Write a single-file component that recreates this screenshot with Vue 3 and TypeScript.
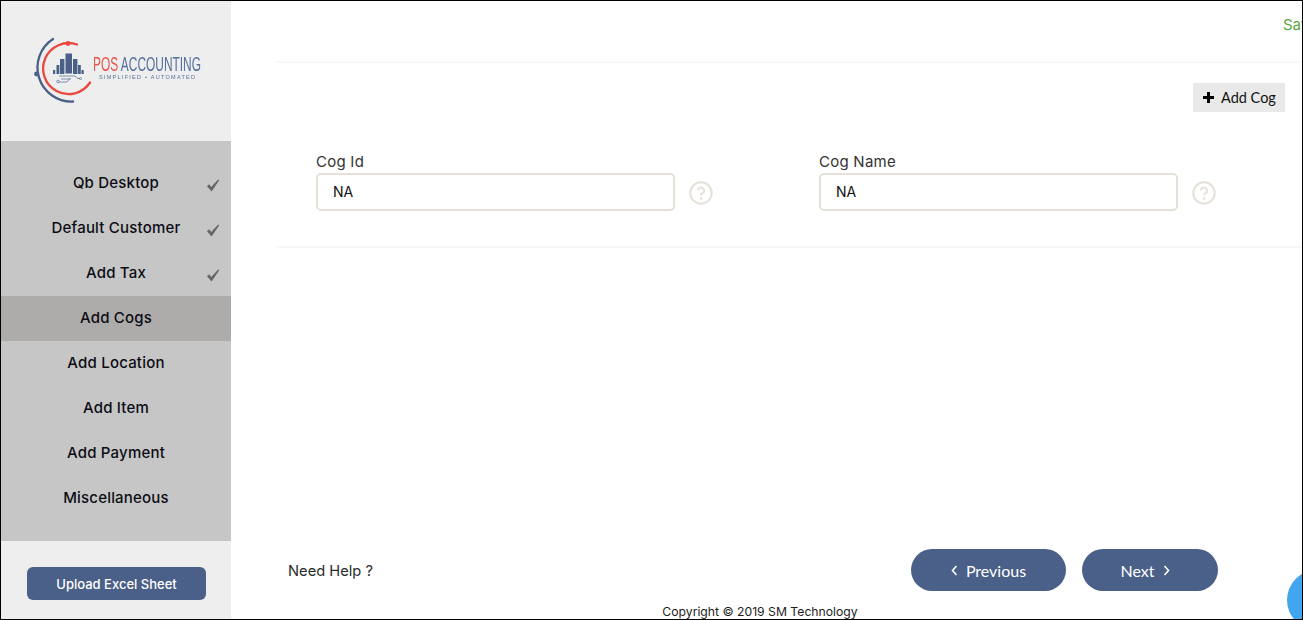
<template>
  <div class="page">
    <aside class="sidebar">
      <div class="logoBox">
        <svg class="logo" width="230" height="140" viewBox="0 0 230 140">
          <g fill="none" stroke-linecap="round">
            <path d="M52 38 A34 34 0 0 0 72 100.5" stroke="#4a6088" stroke-width="2.3" />
            <path d="M76 43.5 A25.5 25.5 0 1 0 89 81.5" stroke="#e8483f" stroke-width="2.3" />
            <circle cx="35.5" cy="73" r="2.4" fill="#4a6088" />
            <circle cx="67" cy="42.5" r="2.4" fill="#e8483f" />
          </g>
          <g fill="#4a6088">
            <rect x="64.5" y="52.5" width="6.5" height="20" />
            <rect x="59" y="58" width="4.4" height="15" />
            <rect x="72" y="58" width="4.4" height="15" />
            <rect x="55.5" y="64" width="2.8" height="9" />
            <rect x="77" y="64" width="2.8" height="9" />
            <rect x="52" y="69" width="2.2" height="4" />
            <rect x="80.5" y="69" width="2.2" height="4" />
          </g>
          <g fill="none" stroke="#6f83a6" stroke-width="0.9">
            <path d="M58 75 H74 L77 77.5 H79" />
            <path d="M60 78 H70" />
            <path d="M58 81 H66 L69 77" />
            <circle cx="57" cy="80.5" r="1.3" />
            <circle cx="79.5" cy="77.5" r="1" />
          </g>
          <text class="logoName" x="92" y="70" textLength="108" lengthAdjust="spacingAndGlyphs"><tspan fill="#e8564e">POS</tspan><tspan fill="#56709c"> ACCOUNTING</tspan></text>
          <text class="logoTag" x="98" y="78" fill="#56709c" textLength="96">SIMPLIFIED • AUTOMATED</text>
        </svg>
      </div>
      <nav class="menu">
        <div v-for="item in steps" :key="item.name" class="menuItem" :class="{ active: item.name === current }">
          <span>{{ item.name }}</span>
          <svg v-if="item.done" class="tick" width="14" height="13" viewBox="0 0 14 13">
            <path d="M1 7.2 L3.2 5.2 L5.2 8 L12.2 0.6 L13.2 1.2 L5.6 12.4 Z" fill="#666" />
          </svg>
        </div>
      </nav>
      <div class="sideFoot">
        <button class="uploadBtn">Upload Excel Sheet</button>
      </div>
    </aside>

    <main class="main">
      <div class="status">Saved</div>
      <div class="addRow">
        <button class="addBtn">
          <svg width="11" height="11" viewBox="0 0 11 11"><path d="M4 0 H7 V4 H11 V7 H7 V11 H4 V7 H0 V4 H4 Z" fill="#000" /></svg>
          Add Cog
        </button>
      </div>
      <div class="fields">
        <div v-for="field in fields" :key="field" class="field">
          <label>{{ field }}</label>
          <div class="inputRow">
            <input type="text" value="NA">
            <svg class="help" width="24" height="24" viewBox="0 0 24 24">
              <circle cx="12" cy="12" r="10.7" fill="none" stroke="#e6e1d8" stroke-width="2" />
              <path d="M8.8 9.6 A3.2 3 0 1 1 13.6 12.2 Q12 13 12 14.6" fill="none" stroke="#e6e1d8" stroke-width="2" />
              <circle cx="12" cy="17.6" r="1.3" fill="#e6e1d8" />
            </svg>
          </div>
        </div>
      </div>
      <div class="spacer"></div>
      <div class="actions">
        <span class="needHelp">Need Help ?</span>
        <div class="navBtns">
          <button class="navBtn prev">
            <svg width="7" height="11" viewBox="0 0 7 11"><path d="M5.5 1 L1.5 5.5 L5.5 10" fill="none" stroke="#fff" stroke-width="1.6" /></svg>
            Previous
          </button>
          <button class="navBtn next">
            Next
            <svg width="7" height="11" viewBox="0 0 7 11"><path d="M1.5 1 L5.5 5.5 L1.5 10" fill="none" stroke="#fff" stroke-width="1.6" /></svg>
          </button>
        </div>
      </div>
      <div class="copyright">Copyright © 2019 SM Technology</div>
      <div class="chatBubble"></div>
    </main>
  </div>
</template>

<script setup lang="ts">
type Step = {
  name: string,
  done: boolean
}

const current = 'Add Cogs'

const steps: Step[] = [
  { name: 'Qb Desktop', done: true },
  { name: 'Default Customer', done: true },
  { name: 'Add Tax', done: true },
  { name: 'Add Cogs', done: false },
  { name: 'Add Location', done: false },
  { name: 'Add Item', done: false },
  { name: 'Add Payment', done: false },
  { name: 'Miscellaneous', done: false }
]

const fields = ['Cog Id', 'Cog Name']
</script>

<style>
body {
  margin: 0;
}
</style>

<style scoped>
.page {
  display: flex;
  box-sizing: border-box;
  width: 1303px;
  height: 620px;
  border: 1px solid #000;
  overflow: hidden;
  background: #fff;
  font-family: "Inter", "Open Sans", sans-serif;
  color: #1d1d1d;
}

.sidebar {
  display: flex;
  flex-direction: column;
  flex: 0 0 230px;
  background: #eeeeee;
}

.logoBox {
  height: 140px;
}

.logo {
  display: block;
  filter: blur(0.35px);
}

.logoName {
  font-family: "Liberation Sans", sans-serif;
  font-size: 20px;
}

.logoTag {
  font-family: "Liberation Sans", sans-serif;
  font-size: 5.5px;
}

.menu {
  height: 400px;
  box-sizing: border-box;
  padding: 20px 0;
  background: #c6c6c6;
}

.menuItem {
  position: relative;
  display: flex;
  align-items: center;
  justify-content: center;
  height: 45px;
  padding-bottom: 2px;
  box-sizing: border-box;
  font-size: 15px;
  font-weight: 500;
  letter-spacing: 0.2px;
  color: #0c0c14;
}

.menuItem.active {
  background: #aeabab;
}

.tick {
  position: absolute;
  left: 205px;
  top: 18px;
}

.sideFoot {
  flex: 1;
  padding: 26px 0 0 26px;
}

.uploadBtn {
  width: 179px;
  height: 33px;
  border: none;
  border-radius: 6px;
  background: #4a6088;
  color: #fff;
  font-family: inherit;
  font-size: 13px;
  font-weight: 500;
}

.main {
  position: relative;
  display: flex;
  flex-direction: column;
  flex: 1;
  min-width: 0;
  padding-left: 45px;
}

.status {
  box-sizing: border-box;
  height: 62px;
  padding: 14px 0 0 1007px;
  border-bottom: 2px solid #f8f8f8;
  color: #5aa846;
  font-size: 15px;
  white-space: nowrap;
  overflow: hidden;
}

.addRow {
  display: flex;
  justify-content: flex-end;
  padding: 20px 17px 0 0;
}

.addBtn {
  display: flex;
  align-items: center;
  gap: 7px;
  width: 92px;
  height: 29px;
  padding: 0 0 0 10px;
  border: none;
  background: #e9e9e9;
  color: #111;
  font-family: "Lato", sans-serif;
  font-size: 14.5px;
}

.fields {
  display: flex;
  box-sizing: border-box;
  height: 136px;
  padding: 40px 0 0 40px;
  border-bottom: 2px solid #f8f8f8;
}

.field {
  flex: 0 0 503px;
}

.field label {
  display: block;
  height: 21px;
  font-size: 15px;
  line-height: 19px;
  letter-spacing: 0.25px;
  color: #333;
}

.inputRow {
  display: flex;
  align-items: center;
  gap: 14px;
}

.inputRow input {
  box-sizing: border-box;
  width: 359px;
  height: 38px;
  padding: 0 15px 1px;
  border: 2px solid #e6e1d8;
  border-radius: 5px;
  outline: none;
  font-family: "Inter", sans-serif;
  font-size: 14px;
  color: #111;
}

.help {
  margin-top: 2px;
}

.spacer {
  flex: 1;
}

.actions {
  display: flex;
  align-items: center;
  justify-content: space-between;
  padding: 0 84px 0 12px;
}

.needHelp {
  padding-top: 2px;
  font-size: 14.7px;
  color: #2b2b2b;
}

.navBtns {
  display: flex;
  gap: 16px;
}

.navBtn {
  display: flex;
  align-items: center;
  justify-content: center;
  gap: 8px;
  height: 42px;
  border: none;
  border-radius: 21px;
  background: #4a6088;
  color: #fff;
  font-family: "Lato", sans-serif;
  font-size: 16px;
}

.prev {
  width: 155px;
}

.next {
  width: 136px;
  padding: 0 10px 0 0;
}

.copyright {
  box-sizing: border-box;
  height: 28px;
  padding: 14px 58px 0 0;
  text-align: center;
  font-size: 12.2px;
  line-height: 14px;
  white-space: nowrap;
}

.chatBubble {
  position: absolute;
  left: 1056px;
  top: 569px;
  width: 60px;
  height: 60px;
  border-radius: 50%;
  background: #42a5f0;
}
</style>
